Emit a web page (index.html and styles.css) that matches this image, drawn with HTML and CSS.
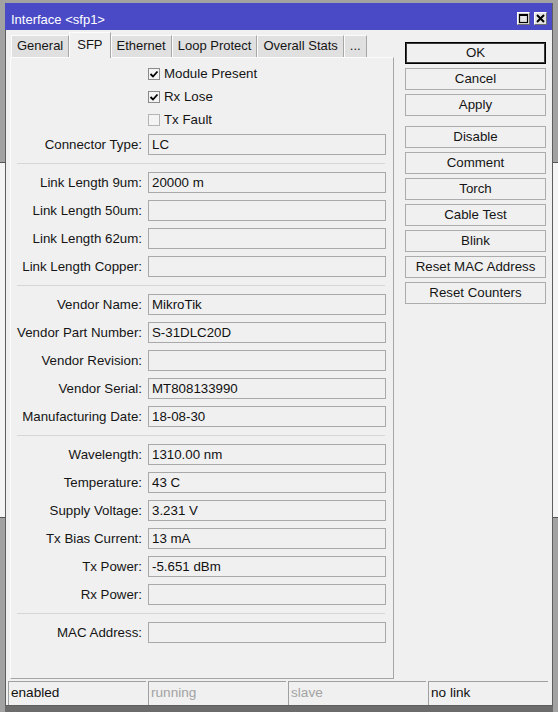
FILE: index.html
```html
<!DOCTYPE html>
<html>
<head>
<meta charset="utf-8">
<title>Interface &lt;sfp1&gt;</title>
<link rel="stylesheet" href="styles.css">
</head>
<body>
<div class="desk-window"></div>
<div class="window">
  <div class="titlebar">
    <span class="title">Interface &lt;sfp1&gt;</span>
    <div class="title-buttons">
      <span class="tbtn"><svg width="11" height="11" viewBox="0 0 11 11"><rect x="1.5" y="1.5" width="8" height="8" fill="none" stroke="#000" stroke-width="1.2"/><rect x="1" y="1" width="9" height="2" fill="#000"/></svg></span>
      <span class="tbtn"><svg width="11" height="11" viewBox="0 0 11 11"><path d="M2 2 L9 9 M9 2 L2 9" stroke="#000" stroke-width="2"/></svg></span>
    </div>
  </div>
  <div class="content">
    <div class="left">
      <div class="tabs">
        <span class="tab">General</span>
        <span class="tab active">SFP</span>
        <span class="tab">Ethernet</span>
        <span class="tab">Loop Protect</span>
        <span class="tab">Overall Stats</span>
        <span class="tab">...</span>
      </div>
      <div class="panel">
        <div class="checks">
          <div class="check"><span class="box checked"><svg width="10" height="10" viewBox="0 0 10 10"><polyline points="1.5,5 4,7.5 8.5,2.5" fill="none" stroke="#000" stroke-width="1.8"/></svg></span>Module Present</div>
          <div class="check"><span class="box checked"><svg width="10" height="10" viewBox="0 0 10 10"><polyline points="1.5,5 4,7.5 8.5,2.5" fill="none" stroke="#000" stroke-width="1.8"/></svg></span>Rx Lose</div>
          <div class="check"><span class="box"></span>Tx Fault</div>
        </div>
        <div class="row first"><span class="label">Connector Type:</span><span class="field">LC</span></div>
        <div class="sep"></div>
        <div class="row"><span class="label">Link Length 9um:</span><span class="field">20000 m</span></div>
        <div class="row"><span class="label">Link Length 50um:</span><span class="field"></span></div>
        <div class="row"><span class="label">Link Length 62um:</span><span class="field"></span></div>
        <div class="row"><span class="label">Link Length Copper:</span><span class="field"></span></div>
        <div class="sep"></div>
        <div class="row"><span class="label">Vendor Name:</span><span class="field">MikroTik</span></div>
        <div class="row"><span class="label">Vendor Part Number:</span><span class="field">S-31DLC20D</span></div>
        <div class="row"><span class="label">Vendor Revision:</span><span class="field"></span></div>
        <div class="row"><span class="label">Vendor Serial:</span><span class="field">MT808133990</span></div>
        <div class="row"><span class="label">Manufacturing Date:</span><span class="field">18-08-30</span></div>
        <div class="sep"></div>
        <div class="row"><span class="label">Wavelength:</span><span class="field">1310.00 nm</span></div>
        <div class="row"><span class="label">Temperature:</span><span class="field">43 C</span></div>
        <div class="row"><span class="label">Supply Voltage:</span><span class="field">3.231 V</span></div>
        <div class="row"><span class="label">Tx Bias Current:</span><span class="field">13 mA</span></div>
        <div class="row"><span class="label">Tx Power:</span><span class="field">-5.651 dBm</span></div>
        <div class="row"><span class="label">Rx Power:</span><span class="field"></span></div>
        <div class="sep"></div>
        <div class="row"><span class="label">MAC Address:</span><span class="field"></span></div>
      </div>
    </div>
    <div class="buttons">
      <span class="btn default">OK</span>
      <span class="btn">Cancel</span>
      <span class="btn">Apply</span>
      <span class="btn group">Disable</span>
      <span class="btn">Comment</span>
      <span class="btn">Torch</span>
      <span class="btn">Cable Test</span>
      <span class="btn">Blink</span>
      <span class="btn">Reset MAC Address</span>
      <span class="btn">Reset Counters</span>
    </div>
  </div>
  <div class="statusbar">
    <span class="cell">enabled</span>
    <span class="cell dim">running</span>
    <span class="cell dim">slave</span>
    <span class="cell last">no link</span>
  </div>
</div>
</body>
</html>
```
FILE: styles.css
```css
html, body {
  margin: 0;
  padding: 0;
}
body {
  width: 558px;
  height: 712px;
  overflow: hidden;
  background: #a2a2a2;
  font-family: "Liberation Sans", Arial, sans-serif;
  font-size: 13.3px;
  color: #151515;
  position: relative;
}
.desk-window {
  position: absolute;
  left: 0;
  top: 162px;
  width: 558px;
  height: 354px;
  background: #f4f4f4;
  border-top: 1px solid #555;
  border-bottom: 1px solid #555;
}
.window {
  position: relative;
  margin: 3px 0 0 5px;
  width: 548px;
  box-sizing: border-box;
  background: #f0f0f0;
  border: 1px solid #5e5e5e;
  border-top: none;
  box-shadow: 0 6px 0 #6c6c6c;
}
.titlebar {
  height: 27px;
  background: #4a4ac6;
  display: flex;
  justify-content: space-between;
  margin-left: -1px;
  padding-left: 6px;
}
.title {
  color: #fff;
  font-size: 13px;
  line-height: 15px;
  padding-top: 9px;
}
.title-buttons {
  display: flex;
  gap: 4px;
  align-self: flex-end;
  margin-bottom: 5px;
  margin-right: 5px;
}
.tbtn {
  width: 13px;
  height: 13px;
  box-sizing: border-box;
  background: #e4e4e4;
  border: 1px solid #fff;
  border-right-color: #707070;
  border-bottom-color: #707070;
  display: flex;
  align-items: center;
  justify-content: center;
}
.content {
  display: flex;
  padding: 2px 6px 0 4px;
  gap: 11px;
}
.left {
  width: 384px;
  display: flex;
  flex-direction: column;
}
.tabs {
  display: flex;
  align-items: flex-end;
  height: 26px;
  margin-bottom: -1px;
  padding-left: 1px;
  position: relative;
  z-index: 1;
}
.tab {
  box-sizing: border-box;
  height: 22px;
  margin-bottom: 1px;
  font-size: 13px;
  line-height: 20px;
  padding: 0 5px;
  background: #e0e0e0;
  border-top: 1px solid #fcfcfc;
  border-left: 1px solid #fcfcfc;
  border-right: 1px solid #a6a6a6;
  color: #151515;
  white-space: nowrap;
}
.tab.active {
  height: 26px;
  margin-bottom: 0;
  padding: 2px 7px 3px;
  background: #f0f0f0;
}
.panel {
  box-sizing: border-box;
  height: 622px;
  border: 1px solid #a6a6a6;
  border-top-color: #fcfcfc;
  border-left-color: #fcfcfc;
  padding-top: 4px;
}
.checks {
  display: flex;
  flex-direction: column;
}
.check {
  display: flex;
  align-items: center;
  height: 23px;
  padding-left: 137px;
  gap: 4px;
}
.box {
  width: 12px;
  height: 12px;
  box-sizing: border-box;
  border: 1px solid #b4b4b4;
  background: #f4f4f4;
  display: flex;
  align-items: center;
  justify-content: center;
}
.box.checked {
  border-color: #8a8a8a;
}
.row {
  display: flex;
  align-items: center;
  height: 21px;
  margin-top: 7px;
  gap: 6px;
}
.row.first {
  margin-top: 3px;
}
.sep + .row {
  margin-top: 8px;
}
.label {
  width: 131px;
  text-align: right;
  white-space: nowrap;
  line-height: 21px;
}
.field {
  width: 238px;
  height: 21px;
  box-sizing: border-box;
  border: 1px solid #a9a9a9;
  background: #f0f0f0;
  padding: 0 3px;
  line-height: 19px;
  color: #111;
}
.sep {
  height: 1px;
  background: #d6d6d6;
  margin: 8px 8px 0 6px;
}
.buttons {
  width: 141px;
  display: flex;
  flex-direction: column;
  gap: 4px;
  padding-top: 10px;
}
.btn {
  height: 22px;
  box-sizing: border-box;
  border: 1px solid #acacac;
  background: #f0f0f0;
  text-align: center;
  line-height: 20px;
  color: #151515;
  white-space: nowrap;
}
.btn.default {
  border: 1px solid #000;
  box-shadow: inset 0 0 0 1px #3a3a3a;
}
.btn.group {
  margin-top: 6px;
}
.statusbar {
  display: flex;
  gap: 2px;
  padding: 2px 0 0 2px;
  height: 26px;
  box-sizing: border-box;
}
.cell {
  width: 138px;
  height: 24px;
  box-sizing: border-box;
  border-top: 1px solid #a0a0a0;
  border-left: 1px solid #a0a0a0;
  padding-left: 2px;
  line-height: 22px;
  font-size: 13.6px;
  color: #111;
}
.cell.dim {
  color: #a3a3a3;
}
.cell.last {
  width: 120px;
}
```
